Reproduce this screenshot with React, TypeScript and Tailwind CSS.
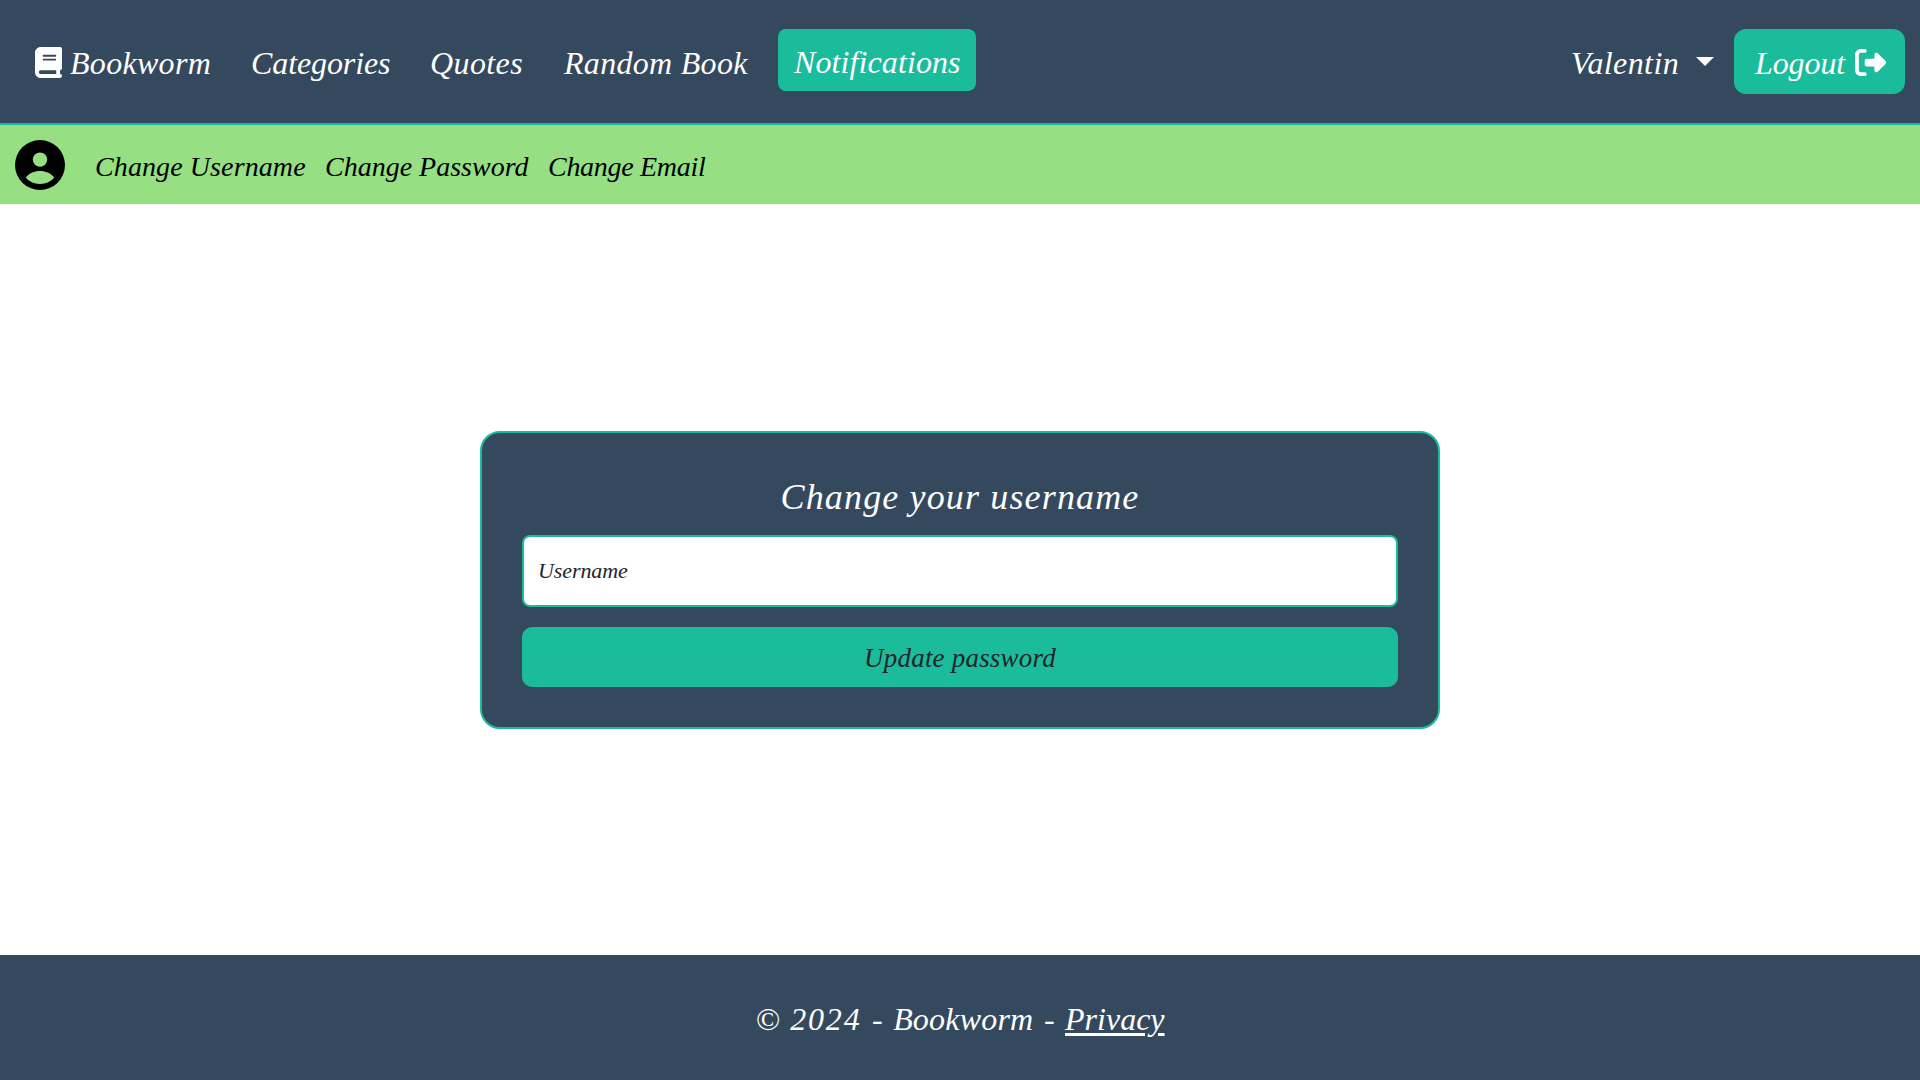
import { FaBook, FaRightFromBracket } from "react-icons/fa6";

function AccountIcon() {
  return (
    <svg viewBox="0 0 50 50" className="size-[50px] shrink-0" aria-hidden="true">
      <path
        fillRule="evenodd"
        d="M25 0a25 25 0 1 1 0 50a25 25 0 1 1 0-50ZM25 12.4a7.2 7.2 0 1 0 0 14.4a7.2 7.2 0 1 0 0-14.4ZM10.8 37.6C14 41.5 19 44 25 44s11-2.500 14.200-6.400C36 33.200 31 31 25 31s-11 2.200-14.200 6.600Z"
      />
    </svg>
  );
}

export default function App() {
  return (
    <div className="flex h-screen flex-col bg-white font-['Liberation_Serif',serif] italic">
      <header className="flex h-[125px] shrink-0 items-start justify-between border-b-2 border-[#1abc9c] bg-[#34495e] pr-[15px] pl-[34px] text-[32px] leading-8 whitespace-nowrap text-white">
        <nav className="flex items-start">
          <a className="mt-[47px] flex w-[217px]">
            <FaBook className="mr-[8px] ml-px h-[31px] w-[27px] shrink-0" />
            <span className="tracking-[0.3px]">Bookworm</span>
          </a>
          <a className="mt-[47px] w-[179px] tracking-[-0.1px]">Categories</a>
          <a className="mt-[47px] w-[134px] tracking-[0.4px]">Quotes</a>
          <a className="mt-[47px] w-[214px] tracking-[0.3px]">Random Book</a>
          <a className="mt-[29px] h-[62px] w-[198px] rounded-lg bg-[#1abc9c] pt-[17px] pl-4 tracking-[0.1px]">
            Notifications
          </a>
        </nav>
        <div className="flex items-start">
          <a className="mt-[47px] flex w-[163px]">
            <span className="w-[125px] tracking-[0.4px]">Valentin</span>
            <span className="mt-[10px] h-0 w-0 border-x-[9px] border-t-[9px] border-x-transparent border-t-white" />
          </a>
          <button className="mt-[29px] flex h-[65px] w-[171px] rounded-xl bg-[#1abc9c] pt-[18px] pl-[21px] italic">
            <span className="w-[100px] text-left tracking-[-0.1px]">Logout</span>
            <FaRightFromBracket className="size-[31px] shrink-0" />
          </button>
        </div>
      </header>

      <nav className="flex h-[79px] shrink-0 items-start bg-[#96df82] pt-[15px] pl-[15px] text-[28px] leading-7 whitespace-nowrap text-black">
        <AccountIcon />
        <a className="mt-[13px] ml-[30px] w-[230px] tracking-[0.1px]">Change Username</a>
        <a className="mt-[13px] w-[223px]">Change Password</a>
        <a className="mt-[13px] tracking-[-0.3px]">Change Email</a>
      </nav>

      <main className="flex grow items-center justify-center">
        <form className="flex h-[298px] w-[960px] flex-col rounded-[20px] border-2 border-[#1abc9c] bg-[#34495e] px-10 pt-[46px]">
          <h1 className="mb-5 text-center text-[36px] leading-9 tracking-[1.15px] text-white">Change your username</h1>
          <label className="flex h-[72px] items-center rounded-lg border-2 border-[#1abc9c] bg-white pt-px pl-[14px] text-[22px] leading-[22px] tracking-[-0.1px] text-[#212529]">
            Username
          </label>
          <button
            type="button"
            className="mt-5 h-[60px] rounded-[10px] bg-[#1abc9c] pt-[2px] text-[27px] leading-7 tracking-[0.2px] text-[#212529] italic"
          >
            Update password
          </button>
        </form>
      </main>

      <footer className="h-[125px] shrink-0 bg-[#34495e] pt-[48px] text-center text-[32px] leading-8 [word-spacing:2.5px] text-white">
        © <span className="tracking-[1.8px]">2024</span> - <span className="tracking-[0.2px]">Bookworm</span> -{" "}
        <a className="underline decoration-[3px] underline-offset-[3px]">Privacy</a>
      </footer>
    </div>
  );
}
